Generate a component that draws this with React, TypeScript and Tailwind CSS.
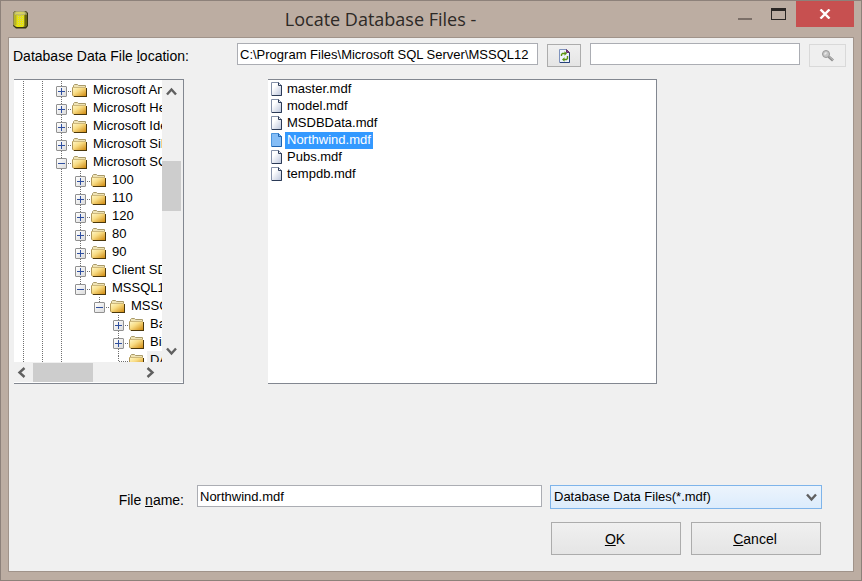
import { useState } from 'react';
import type { ReactNode } from 'react';

type Cell = 'blank' | 'line' | 'plus' | 'minus' | 'minusOpen' | 'leaf';

interface TreeNode {
  cells: Cell[];
  name: string;
  current?: boolean;
}

const outer: Cell[] = ['line', 'line'];
const inner: Cell[] = ['line', 'line', 'line'];

const nodes: TreeNode[] = [
  { cells: [...outer, 'plus'], name: 'Microsoft Analysis Services' },
  { cells: [...outer, 'plus'], name: 'Microsoft Help Viewer' },
  { cells: [...outer, 'plus'], name: 'Microsoft Identity Extensions' },
  { cells: [...outer, 'plus'], name: 'Microsoft Silverlight' },
  { cells: [...outer, 'minusOpen'], name: 'Microsoft SQL Server' },
  { cells: [...inner, 'plus'], name: '100' },
  { cells: [...inner, 'plus'], name: '110' },
  { cells: [...inner, 'plus'], name: '120' },
  { cells: [...inner, 'plus'], name: '80' },
  { cells: [...inner, 'plus'], name: '90' },
  { cells: [...inner, 'plus'], name: 'Client SDK' },
  { cells: [...inner, 'minus'], name: 'MSSQL12' },
  { cells: [...inner, 'blank', 'minus'], name: 'MSSQL' },
  { cells: [...inner, 'blank', 'blank', 'plus'], name: 'Backup' },
  { cells: [...inner, 'blank', 'blank', 'plus'], name: 'Binn' },
  { cells: [...inner, 'blank', 'blank', 'leaf'], name: 'DATA', current: true },
];

const files = ['master.mdf', 'model.mdf', 'MSDBData.mdf', 'Northwind.mdf', 'Pubs.mdf', 'tempdb.mdf'];

const dotsDown = 'w-px bg-[repeating-linear-gradient(to_bottom,#707070_0_1px,transparent_1px_2px)]';
const dotsAcross = 'h-px bg-[repeating-linear-gradient(to_right,#707070_0_1px,transparent_1px_2px)]';

function DatabaseIcon() {
  return (
    <svg width="15" height="19" viewBox="0 0 15 19" aria-hidden="true">
      <path d="M0 3L2 1H13L15 3V16L13 18.500H3L0 16Z" fill="#35340f" />
      <path d="M0 3L2 1H12L14 3V15L12 17H3L0 15Z" fill="#8c8850" />
      <path d="M1.500 4H11.500V15L10 17H4L1.500 15Z" fill="#e6e30e" />
      <path d="M1.500 5H3.500V15H1.500Z" fill="#b5b22a" />
      <path d="M11.500 5H14V15L11.500 17Z" fill="#6a670c" />
      <ellipse cx="7" cy="3.200" rx="5.500" ry="1.900" fill="#d5d260" stroke="#a5a284" strokeWidth=".8" />
      <path d="M5.500 6v10M7.500 6v10M9.500 6v10" stroke="#cfcc74" strokeDasharray="1 1" />
    </svg>
  );
}

function FolderIcon() {
  return (
    <svg width="15" height="13" viewBox="0 0 15 13" aria-hidden="true">
      <defs>
        <linearGradient id="folder" x1="0" y1="0" x2="1" y2="1">
          <stop offset="0" stopColor="#fffbd2" />
          <stop offset=".45" stopColor="#f8dc84" />
          <stop offset="1" stopColor="#d08a10" />
        </linearGradient>
      </defs>
      <path d="M1.500 3V1.500L2.500 .5H5.500L6.500 1.500H13.500V4H1.500Z" fill="#efe3b4" stroke="#a99a6a" />
      <path d="M0 3H14V12H1Z" fill="url(#folder)" />
      <path d="M.5 3.500V11L1.500 12.500" fill="none" stroke="#b09658" />
      <path d="M14.500 4V13" stroke="#4a370c" />
      <path d="M2 12.500H15" stroke="#4a370c" />
      <path d="M0 3.500H14" stroke="#cdb87c" />
    </svg>
  );
}

function FileIcon({ active }: { active: boolean }) {
  return (
    <svg width="12" height="14" viewBox="0 0 12 14" className="mt-px self-start" aria-hidden="true">
      <defs>
        <linearGradient id="page" x1="0" y1="0" x2="1" y2="1">
          <stop offset=".3" stopColor="#ffffff" />
          <stop offset="1" stopColor="#b9c3da" />
        </linearGradient>
      </defs>
      <path
        d="M.5 .5H7.500L10.500 3.500V13.500H.5Z"
        fill={active ? '#84bdf6' : 'url(#page)'}
        stroke={active ? '#4a94dc' : '#8490a8'}
      />
      <path d="M7.500 .5V3.500H10.500V13.500H1" fill="none" stroke={active ? '#1f62ae' : '#2b3a56'} />
    </svg>
  );
}

function RefreshPageIcon() {
  return (
    <svg width="13" height="14" viewBox="0 0 13 14" aria-hidden="true">
      <path d="M1.500 .5H8.500L11.500 3.500V13.500H1.500Z" fill="#eef3fc" stroke="#7f93bd" />
      <path d="M11.500 3.500V13.500H2" fill="none" stroke="#26417a" />
      <path d="M8.500 .5V3.500H11.500Z" fill="#8a3d86" stroke="#63346e" />
      <path d="M3.500 7V5.500L4.500 4.500H7" fill="none" stroke="#5c9410" strokeWidth="1.400" />
      <path d="M6.500 2.200L9 4.500L6.500 6.800Z" fill="#5c9410" />
      <path d="M9.500 7V9.500L8.500 10.500H6" fill="none" stroke="#5c9410" strokeWidth="1.400" />
      <path d="M6.500 8.200L4 10.500L6.500 12.800Z" fill="#5c9410" />
    </svg>
  );
}

function MagnifierIcon() {
  return (
    <svg width="12" height="12" viewBox="0 0 12 12" aria-hidden="true">
      <path d="M6.500 6.500L11 10.500" stroke="#8e8e8e" strokeWidth="2.800" />
      <path d="M7 6.500L11 10" stroke="#bdbdbd" />
      <circle cx="4" cy="4" r="3.500" fill="#c6c6c6" stroke="#989898" />
      <path d="M2.500 4.500L4.500 2.500" stroke="#ececec" strokeWidth="1.500" />
    </svg>
  );
}

function Chevron({ d, width, height }: { d: string; width: number; height: number }) {
  return (
    <svg width={width} height={height} viewBox={`0 0 ${width} ${height}`} aria-hidden="true">
      <path d={d} fill="none" stroke="#606060" strokeWidth="2.400" />
    </svg>
  );
}

function TreeCell({ kind }: { kind: Cell }) {
  if (kind === 'blank') return <span className="w-[19px] shrink-0" />;
  if (kind === 'line') {
    return (
      <span className="flex w-[19px] shrink-0 pl-[9px]">
        <span className={dotsDown} />
      </span>
    );
  }
  return (
    <span className="grid w-[19px] shrink-0 grid-cols-[4px_11px_4px] grid-rows-[5px_11px_2px]">
      <span className={`col-start-2 ml-[5px] ${dotsDown}`} />
      {kind === 'leaf' ? (
        <span className="col-start-2 row-start-2 flex items-center pl-[5px]">
          <span className={`h-full ${dotsDown}`} />
          <span className={`flex-1 ${dotsAcross}`} />
        </span>
      ) : (
        <button
          aria-label={kind === 'plus' ? 'Expand' : 'Collapse'}
          className="col-start-2 row-start-2 flex size-[11px] items-center justify-center rounded-[1px] border border-[#919191] bg-linear-to-br from-white to-[#dcdcdc]"
        >
          <svg width="7" height="7" viewBox="0 0 7 7" shapeRendering="crispEdges" aria-hidden="true">
            <path d={kind === 'plus' ? 'M0 3.500H7M3.500 0V7' : 'M0 3.500H7'} stroke="#2f4f9f" />
          </svg>
        </button>
      )}
      <span className="col-start-3 row-start-2 flex items-center pl-px">
        <span className={`w-full ${dotsAcross}`} />
      </span>
      {kind !== 'minus' && <span className={`col-start-2 row-start-3 ml-[5px] ${dotsDown}`} />}
    </span>
  );
}

function FolderTree() {
  return (
    <section
      aria-label="Folders"
      className="flex w-[170px] shrink-0 flex-col border-t border-r border-b border-[#828790] bg-[#f0f0f0]"
    >
      <div className="flex min-h-0 flex-1">
        <ul className="min-h-0 w-[148px] overflow-hidden bg-white pt-px">
          {nodes.map((node) => (
            <li key={node.name} className="flex h-[18px] text-[13px] leading-[18px] whitespace-nowrap">
              {node.cells.map((cell, i) => (
                <TreeCell key={i} kind={cell} />
              ))}
              <span className="flex w-[19px] shrink-0 items-center pl-px">
                <FolderIcon />
              </span>
              <span className={node.current ? 'bg-[#f0f0f0] px-[3px]' : 'px-[3px]'}>{node.name}</span>
            </li>
          ))}
        </ul>
        <div className="flex flex-1 flex-col">
          <button aria-label="Scroll up" className="flex h-[22px] w-[19px] items-center justify-center">
            <Chevron d="M1 7.500L5.500 2.500L10 7.500" width={11} height={9} />
          </button>
          <div className="w-[19px] flex-1 pt-[59px]">
            <div className="h-[50px] bg-[#cdcdcd]" />
          </div>
          <button aria-label="Scroll down" className="flex h-[22px] w-[19px] items-center justify-center">
            <Chevron d="M1 1.500L5.500 6.500L10 1.500" width={11} height={9} />
          </button>
        </div>
      </div>
      <div className="flex h-[21px] shrink-0 items-center border-b border-white pr-[21px]">
        <button aria-label="Scroll left" className="flex h-full w-[19px] items-center justify-center pr-[4px]">
          <Chevron d="M7.500 1L2.500 5.500L7.500 10" width={9} height={11} />
        </button>
        <div className="h-[19px] flex-1">
          <div className="h-full w-[60px] bg-[#cdcdcd]" />
        </div>
        <button aria-label="Scroll right" className="flex h-full w-[19px] items-center justify-center pr-[4px]">
          <Chevron d="M1.500 1L6.500 5.500L1.500 10" width={9} height={11} />
        </button>
      </div>
    </section>
  );
}

function PushButton({ children }: { children: ReactNode }) {
  return (
    <button className="h-[33px] w-[130px] border border-[#acacac] bg-linear-to-b from-[#f0f0f0] to-[#e5e5e5] pt-px pr-[2px] text-[14px]">
      {children}
    </button>
  );
}

const fieldClass = 'h-[22px] min-w-0 border border-[#abadb3] bg-white px-[2px] text-[13px] outline-none';

export default function App() {
  const [selected, setSelected] = useState('Northwind.mdf');
  const [fileName, setFileName] = useState('Northwind.mdf');

  const pick = (name: string) => {
    setSelected(name);
    setFileName(name);
  };

  return (
    <div className="flex h-screen flex-col border border-[#8d817a] bg-[#bcada2] px-[7px] pb-[8px] font-['Liberation_Sans',Arial,sans-serif] text-black">
      <header className="flex h-[36px] shrink-0 items-start">
        <div className="flex h-full w-[58px] items-center pl-[5px]">
          <DatabaseIcon />
        </div>
        <h1 className="flex-1 pr-[43px] text-center font-['Open_Sans','Noto_Sans',sans-serif] text-[18px] leading-[36px] text-[#2d2926]">
          Locate Database Files -
        </h1>
        <button aria-label="Minimize" className="flex h-[26px] w-[33px] items-end pb-[7px]">
          <span className="h-[2px] w-[14px] bg-[#7b6f68]" />
        </button>
        <button aria-label="Maximize" className="flex h-[26px] w-[25px] items-center">
          <span className="h-[12px] w-[15px] border border-t-3 border-[#2a2624]" />
        </button>
        <button aria-label="Close" className="flex h-[26px] w-[58px] items-center justify-center bg-[#c75050]">
          <svg width="12" height="10" viewBox="0 0 12 10" aria-hidden="true">
            <path d="M1.500 .5L10.500 9.500M10.500 .5L1.500 9.500" stroke="#fff" strokeWidth="2.400" />
          </svg>
        </button>
      </header>

      <main className="flex min-h-0 flex-1 flex-col border border-[#a0938a] bg-[#f0f0f0] pt-[5px] pb-[16px] pl-[4px]">
        <div className="flex h-[24px] shrink-0 items-start pr-[7px]">
          <label htmlFor="location" className="w-[224px] shrink-0 text-[14px] leading-[26px]">
            Database Data File <u>l</u>ocation:
          </label>
          <input
            id="location"
            className={`${fieldClass} flex-[296]`}
            defaultValue="C:\Program Files\Microsoft SQL Server\MSSQL12"
          />
          <button
            aria-label="Refresh"
            className="mt-px ml-[9px] flex h-[23px] w-[34px] shrink-0 items-center justify-center border border-[#acacac] bg-linear-to-b from-[#f0f0f0] to-[#e5e5e5]"
          >
            <RefreshPageIcon />
          </button>
          <input aria-label="Search" className={`${fieldClass} ml-[9px] flex-[204]`} />
          <button
            aria-label="Find"
            disabled
            className="mt-px ml-[9px] flex h-[23px] w-[37px] shrink-0 items-center justify-center border border-[#d9d9d9] bg-[#efefef]"
          >
            <MagnifierIcon />
          </button>
        </div>

        <div className="mt-[12px] ml-px flex min-h-0 flex-1 gap-[84px] pr-[196px]">
          <FolderTree />
          <ul
            role="listbox"
            aria-label="Files"
            className="min-w-0 flex-1 overflow-hidden border-t border-r border-b border-[#828790] bg-white pt-px pl-[3px]"
          >
            {files.map((name) => (
              <li key={name} role="option" aria-selected={name === selected}>
                <button onClick={() => pick(name)} className="flex h-[17px] items-center gap-[2px]">
                  <FileIcon active={name === selected} />
                  <span
                    className={
                      name === selected
                        ? 'bg-[#3399ff] px-[2px] pb-px text-[13px] leading-[16px] text-white'
                        : 'px-[2px] pb-px text-[13px] leading-[16px]'
                    }
                  >
                    {name}
                  </span>
                </button>
              </li>
            ))}
          </ul>
        </div>

        <div className="mt-[101px] flex shrink-0 items-start pr-[31px]">
          <label htmlFor="filename" className="w-[184px] shrink-0 pr-[13px] text-right text-[14px] leading-[30px]">
            File <u>n</u>ame:
          </label>
          <input
            id="filename"
            className={`${fieldClass} flex-[339]`}
            value={fileName}
            onChange={(e) => setFileName(e.target.value)}
          />
          <div className="relative ml-[8px] min-w-0 flex-[272]">
            <select
              aria-label="File type"
              className="block h-[24px] w-full appearance-none border border-[#7eb4ea] bg-linear-to-b from-[#ecf4fc] to-[#dcecfc] pl-[3px] text-[13px] outline-none"
            >
              <option>Database Data Files(*.mdf)</option>
            </select>
            <span className="pointer-events-none absolute inset-y-0 right-[5px] flex items-center">
              <Chevron d="M1 1.500L5.500 6.500L10 1.500" width={11} height={9} />
            </span>
          </div>
        </div>

        <div className="mt-[7px] flex shrink-0 justify-end gap-[10px] pr-[32px]">
          <PushButton>
            <u>O</u>K
          </PushButton>
          <PushButton>
            <u>C</u>ancel
          </PushButton>
        </div>
      </main>
    </div>
  );
}
